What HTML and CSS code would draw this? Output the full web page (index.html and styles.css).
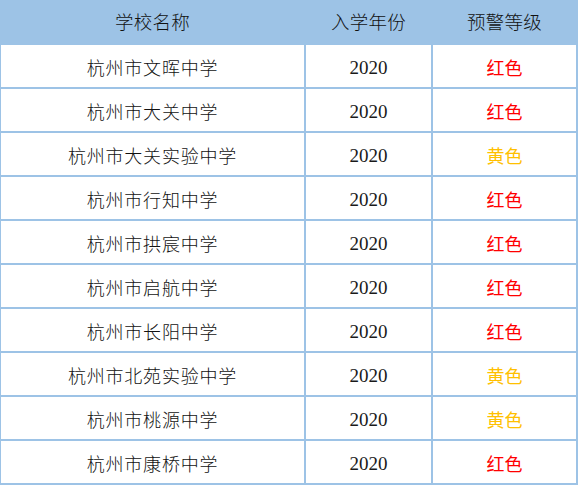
FILE: index.html
```html
<!DOCTYPE html>
<html lang="zh-CN">
<head>
<meta charset="utf-8">
<title>预警名单</title>
<link rel="stylesheet" href="styles.css">
</head>
<body>
<div class="table">
  <div class="cell head">学校名称</div>
  <div class="cell head">入学年份</div>
  <div class="cell head">预警等级</div>

  <div class="cell name">杭州市文晖中学</div>
  <div class="cell year">2020</div>
  <div class="cell level red">红色</div>

  <div class="cell name">杭州市大关中学</div>
  <div class="cell year">2020</div>
  <div class="cell level red">红色</div>

  <div class="cell name">杭州市大关实验中学</div>
  <div class="cell year">2020</div>
  <div class="cell level yellow">黄色</div>

  <div class="cell name">杭州市行知中学</div>
  <div class="cell year">2020</div>
  <div class="cell level red">红色</div>

  <div class="cell name">杭州市拱宸中学</div>
  <div class="cell year">2020</div>
  <div class="cell level red">红色</div>

  <div class="cell name">杭州市启航中学</div>
  <div class="cell year">2020</div>
  <div class="cell level red">红色</div>

  <div class="cell name">杭州市长阳中学</div>
  <div class="cell year">2020</div>
  <div class="cell level red">红色</div>

  <div class="cell name">杭州市北苑实验中学</div>
  <div class="cell year">2020</div>
  <div class="cell level yellow">黄色</div>

  <div class="cell name">杭州市桃源中学</div>
  <div class="cell year">2020</div>
  <div class="cell level yellow">黄色</div>

  <div class="cell name">杭州市康桥中学</div>
  <div class="cell year">2020</div>
  <div class="cell level red">红色</div>
</div>
</body>
</html>
```

FILE: styles.css
```css
html, body {
  margin: 0;
  padding: 0;
  background: #ffffff;
}

.table {
  width: 578px;
  box-sizing: border-box;
  display: grid;
  grid-template-columns: 305px 127px 145px;
  grid-template-rows: 45px repeat(10, 44px);
  border-left: 1px solid #9dc3e6;
  font-family: "Noto Sans CJK SC", "Noto Sans", sans-serif;
  font-size: 18px;
  color: #1a1a1a;
}

.cell {
  box-sizing: border-box;
  display: flex;
  align-items: center;
  justify-content: center;
  border-right: 2px solid #9dc3e6;
  border-bottom: 2px solid #9dc3e6;
  padding-top: 2px;
  line-height: 1;
  white-space: nowrap;
}

.head {
  background: #9dc3e6;
  padding-top: 0;
  font-size: 18.5px;
  font-weight: 300;
  color: #111111;
  letter-spacing: 0.3px;
}

.name {
  font-weight: 300;
  color: #111111;
  letter-spacing: 0.8px;
}

.year {
  font-family: "Liberation Serif", "Times New Roman", serif;
  font-size: 19px;
}

.red {
  color: #ff0000;
}

.yellow {
  color: #ffc000;
}
```
